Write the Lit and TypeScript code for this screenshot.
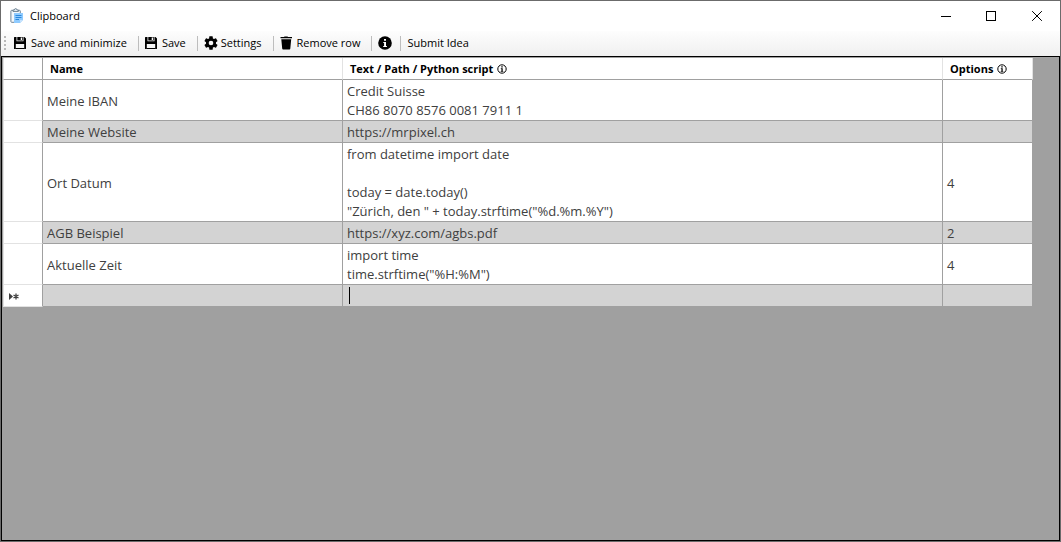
import { LitElement, html, css, svg } from "lit";
import { customElement, state } from "lit/decorators.js";

interface Entry {
  name: string;
  text: string;
  options: string;
}

const saveIcon = html`<svg class="icon" viewBox="1 0 14 14" aria-hidden="true">
  <path fill="#000" d="M1.600 1H3.500V5.200H10.500V1H11.500L13 2.500V12.400Q13 13 12.400 13H11.200V8H2.800V13H1.600Q1 13 1 12.400V1.600Q1 1 1.600 1Z" />
  <path fill="#000" fill-rule="evenodd" d="M4.300 1H9.800V4.500H4.300ZM7.700 1.500V3.900H9.100V1.500Z" />
  <path fill="#000" d="M2.500 12H11.500V13H2.500Z" />
</svg>`;

const gearIcon = html`<svg class="icon" viewBox="1.500 1.500 21 21" aria-hidden="true">
  <path fill="#000" d="M12 15.500A3.500 3.500 0 0 1 8.500 12 3.500 3.500 0 0 1 12 8.500a3.500 3.500 0 0 1 3.500 3.500 3.500 3.500 0 0 1-3.500 3.500m7.430-2.530c.04-.32.07-.64.07-.97s-.03-.66-.07-1l2.110-1.630c.19-.15.24-.42.12-.64l-2-3.460c-.12-.22-.39-.31-.61-.22l-2.490 1c-.52-.39-1.060-.73-1.690-.98l-.37-2.650A.506.506 0 0 0 14 2h-4c-.25 0-.46.18-.5.42l-.37 2.650c-.63.25-1.170.59-1.690.98l-2.490-1c-.22-.09-.49 0-.61.22l-2 3.460c-.13.22-.07.49.12.64L4.570 11c-.04.34-.07.67-.07 1s.03.65.07.97l-2.110 1.660c-.19.15-.25.42-.12.64l2 3.460c.12.22.39.3.61.22l2.490-1.010c.52.4 1.060.74 1.690.99l.37 2.650c.04.24.25.42.5.42h4c.25 0 .46-.18.5-.42l.37-2.650c.63-.26 1.170-.59 1.690-.99l2.490 1.010c.22.08.49 0 .61-.22l2-3.460c.12-.22.07-.49-.12-.64z" />
</svg>`;

const trashIcon = html`<svg class="icon" viewBox="0.500 0 14 14" aria-hidden="true">
  <path fill="#000" d="M1 1H4.500L5 .4H8L8.500 1H12.500V2.200H1ZM1.800 3.200H11.700L10.800 12.600Q10.700 13.500 9.900 13.500H3.600Q2.800 13.500 2.700 12.600Z" />
</svg>`;

const infoIcon = html`<svg class="icon" viewBox="0 0 14 14" aria-hidden="true">
  <circle cx="7" cy="7" r="6.800" fill="#000" />
  <path fill="#fff" d="M6 3H8V4.700H6ZM5.300 6H8V10H8.900V11H5.200V10H6.100V7H5.300Z" />
</svg>`;

const clipboardIcon = html`<svg class="app-icon" viewBox="0 0 14 16" aria-hidden="true">
  <rect x="0.900" y="2.300" width="9.400" height="12" rx="0.800" fill="#f4f8fb" stroke="#6d8294" />
  <path d="M3 3.500V2H4.400Q4.600.5 5.700.5T7 2H8.400V3.500Z" fill="#dfe8ef" stroke="#5d7385" stroke-width=".8" />
  <path d="M4 5H13V12L10 15H4Z" fill="#8fcbff" />
  <path d="M10 15V12H13Z" fill="#c4e2fd" />
  <path d="M5.500 7.500H11.500M5.500 9.500H11.500M5.500 11.500H9" stroke="#2b88dc" />
</svg>`;

const hintIcon = html`<svg class="hint" viewBox="0 0 10 10" role="img" aria-label="Info">
  <circle cx="5" cy="5" r="4.200" fill="none" stroke="#000" />
  <path fill="#000" d="M4.300 2.200H5.700V3.500H4.300ZM3.800 4.200H5.700V7H6.300V7.800H3.700V7H4.400V5H3.800Z" />
</svg>`;

@customElement("app-root")
export class AppRoot extends LitElement {
  static styles = css`
    :host {
      display: flex;
      flex-direction: column;
      box-sizing: border-box;
      min-height: 100vh;
      border: 1px solid #6b6b6b;
      background: #fff;
      color: #000;
      font: 11px/16px "Open Sans", "Noto Sans", sans-serif;
    }
    button {
      font: inherit;
      color: inherit;
      background: none;
      border: 0;
      margin: 0;
      padding: 0;
    }
    .titlebar {
      display: flex;
      align-items: center;
      height: 30px;
      padding-left: 9px;
    }
    .app-icon {
      width: 14px;
      height: 16px;
      margin-right: 6px;
    }
    .title {
      flex: 1;
      margin: 0;
      font-size: 11px;
      font-weight: 400;
    }
    .window-button {
      display: flex;
      align-items: center;
      justify-content: center;
      width: 46px;
      height: 29px;
    }
    .window-button svg {
      width: 11px;
      height: 11px;
    }
    .toolbar {
      display: flex;
      align-items: center;
      box-sizing: border-box;
      height: 25px;
      padding: 0 0 1px 3px;
      background: linear-gradient(#fdfdfd, #f0f0f0);
    }
    .grip {
      width: 4px;
      height: 14px;
      margin-right: 6px;
      background: repeating-linear-gradient(#b8b8b8 0 2px, transparent 2px 4px) 0 0 / 2px 100% no-repeat;
    }
    .tool {
      display: flex;
      align-items: center;
      gap: 3px;
      height: 22px;
      padding: 0 11px 0 0;
    }
    .tool.compact {
      padding-right: 8px;
    }
    .icon {
      width: 14px;
      height: 14px;
    }
    .separator {
      width: 1px;
      height: 15px;
      margin-right: 6px;
      background: #bdbdbd;
    }
    .grid {
      flex: 1;
      padding: 1px 26px 0 1px;
      border: 1px solid #000;
      background: #a0a0a0;
    }
    table {
      width: 100%;
      table-layout: fixed;
      border-collapse: separate;
      border-spacing: 0;
    }
    .col-marker {
      width: 40px;
    }
    .col-name {
      width: 300px;
    }
    .col-options {
      width: 90px;
    }
    th,
    td {
      box-sizing: border-box;
      padding: 2px 4px 0;
      border: solid #a0a0a0;
      border-width: 0 1px 1px 0;
      background: #fff;
      text-align: left;
      vertical-align: middle;
    }
    thead th {
      height: 22px;
      padding: 0 7px;
      border-right-color: #e2e2e2;
      font-size: 11px;
      line-height: 21px;
      font-weight: 700;
    }
    thead td {
      border-left: 1px solid #e2e2e2;
    }
    tbody th {
      border-left: 1px solid #e2e2e2;
      border-bottom-color: #e2e2e2;
      line-height: 19px;
    }
    tbody td {
      height: 22px;
      color: #404040;
      font-size: 13px;
      line-height: 19px;
      white-space: pre-line;
    }
    tbody tr:nth-child(even) td {
      background: #d3d3d3;
    }
    .hint {
      width: 10px;
      height: 10px;
      margin-left: 4px;
      vertical-align: -1px;
    }
    .new-marker {
      display: block;
      width: 11px;
      height: 7px;
    }
    tbody .editing {
      padding: 1px 4px 1px 6px;
    }
    .editor {
      display: block;
      box-sizing: border-box;
      width: 100%;
      height: 17px;
      margin: 0;
      padding: 0;
      border: 0;
      border-left: 1px solid #000;
      outline: 0;
      background: none;
      color: inherit;
      font: inherit;
    }
  `;

  @state() private entries: Entry[] = [
    { name: "Meine IBAN", text: "Credit Suisse\nCH86 8070 8576 0081 7911 1", options: "" },
    { name: "Meine Website", text: "https://mrpixel.ch", options: "" },
    {
      name: "Ort Datum",
      text: 'from datetime import date\n\ntoday = date.today()\n"Zürich, den " + today.strftime("%d.%m.%Y")',
      options: "4",
    },
    { name: "AGB Beispiel", text: "https://xyz.com/agbs.pdf", options: "2" },
    { name: "Aktuelle Zeit", text: 'import time\ntime.strftime("%H:%M")', options: "4" },
  ];

  private windowButton(label: string, shape: unknown) {
    return html`<button class="window-button" aria-label=${label}>
      <svg viewBox="0 0 11 11" fill="none" stroke="#000">${shape}</svg>
    </button>`;
  }

  render() {
    return html`
      <header class="titlebar">
        ${clipboardIcon}
        <h1 class="title">Clipboard</h1>
        ${this.windowButton("Minimize", svg`<path d="M1 5.500H11" />`)}
        ${this.windowButton("Maximize", svg`<rect x="0.500" y="0.500" width="9" height="9" />`)}
        ${this.windowButton("Close", svg`<path d="M.5 .5L9.500 9.500M9.500 .5L.5 9.500" stroke-linecap="square" />`)}
      </header>
      <div class="toolbar" role="toolbar" aria-label="Actions">
        <span class="grip"></span>
        <button class="tool">${saveIcon}Save and minimize</button>
        <span class="separator"></span>
        <button class="tool">${saveIcon}Save</button>
        <span class="separator"></span>
        <button class="tool">${gearIcon}Settings</button>
        <span class="separator"></span>
        <button class="tool">${trashIcon}Remove row</button>
        <span class="separator"></span>
        <button class="tool compact" aria-label="About">${infoIcon}</button>
        <span class="separator"></span>
        <button class="tool compact">Submit Idea</button>
      </div>
      <main class="grid">
        <table>
          <colgroup>
            <col class="col-marker" />
            <col class="col-name" />
            <col />
            <col class="col-options" />
          </colgroup>
          <thead>
            <tr>
              <td></td>
              <th scope="col">Name</th>
              <th scope="col">Text / Path / Python script${hintIcon}</th>
              <th scope="col">Options${hintIcon}</th>
            </tr>
          </thead>
          <tbody>
            ${this.entries.map(
              (e) => html`<tr>
                <th scope="row"></th>
                <td>${e.name}</td>
                <td>${e.text}</td>
                <td>${e.options}</td>
              </tr>`
            )}
            <tr>
              <th scope="row">
                <svg class="new-marker" viewBox="0 0 11 7" role="img" aria-label="New row">
                  <path d="M1 0L5 3.500L1 7Z" fill="#404040" />
                  <path d="M8 .5V6.500M5.500 2L10.500 5M10.500 2L5.500 5" stroke="#404040" stroke-width="1.300" />
                </svg>
              </th>
              <td></td>
              <td class="editing"><input class="editor" aria-label="Text / Path / Python script" /></td>
              <td></td>
            </tr>
          </tbody>
        </table>
      </main>
    `;
  }
}
